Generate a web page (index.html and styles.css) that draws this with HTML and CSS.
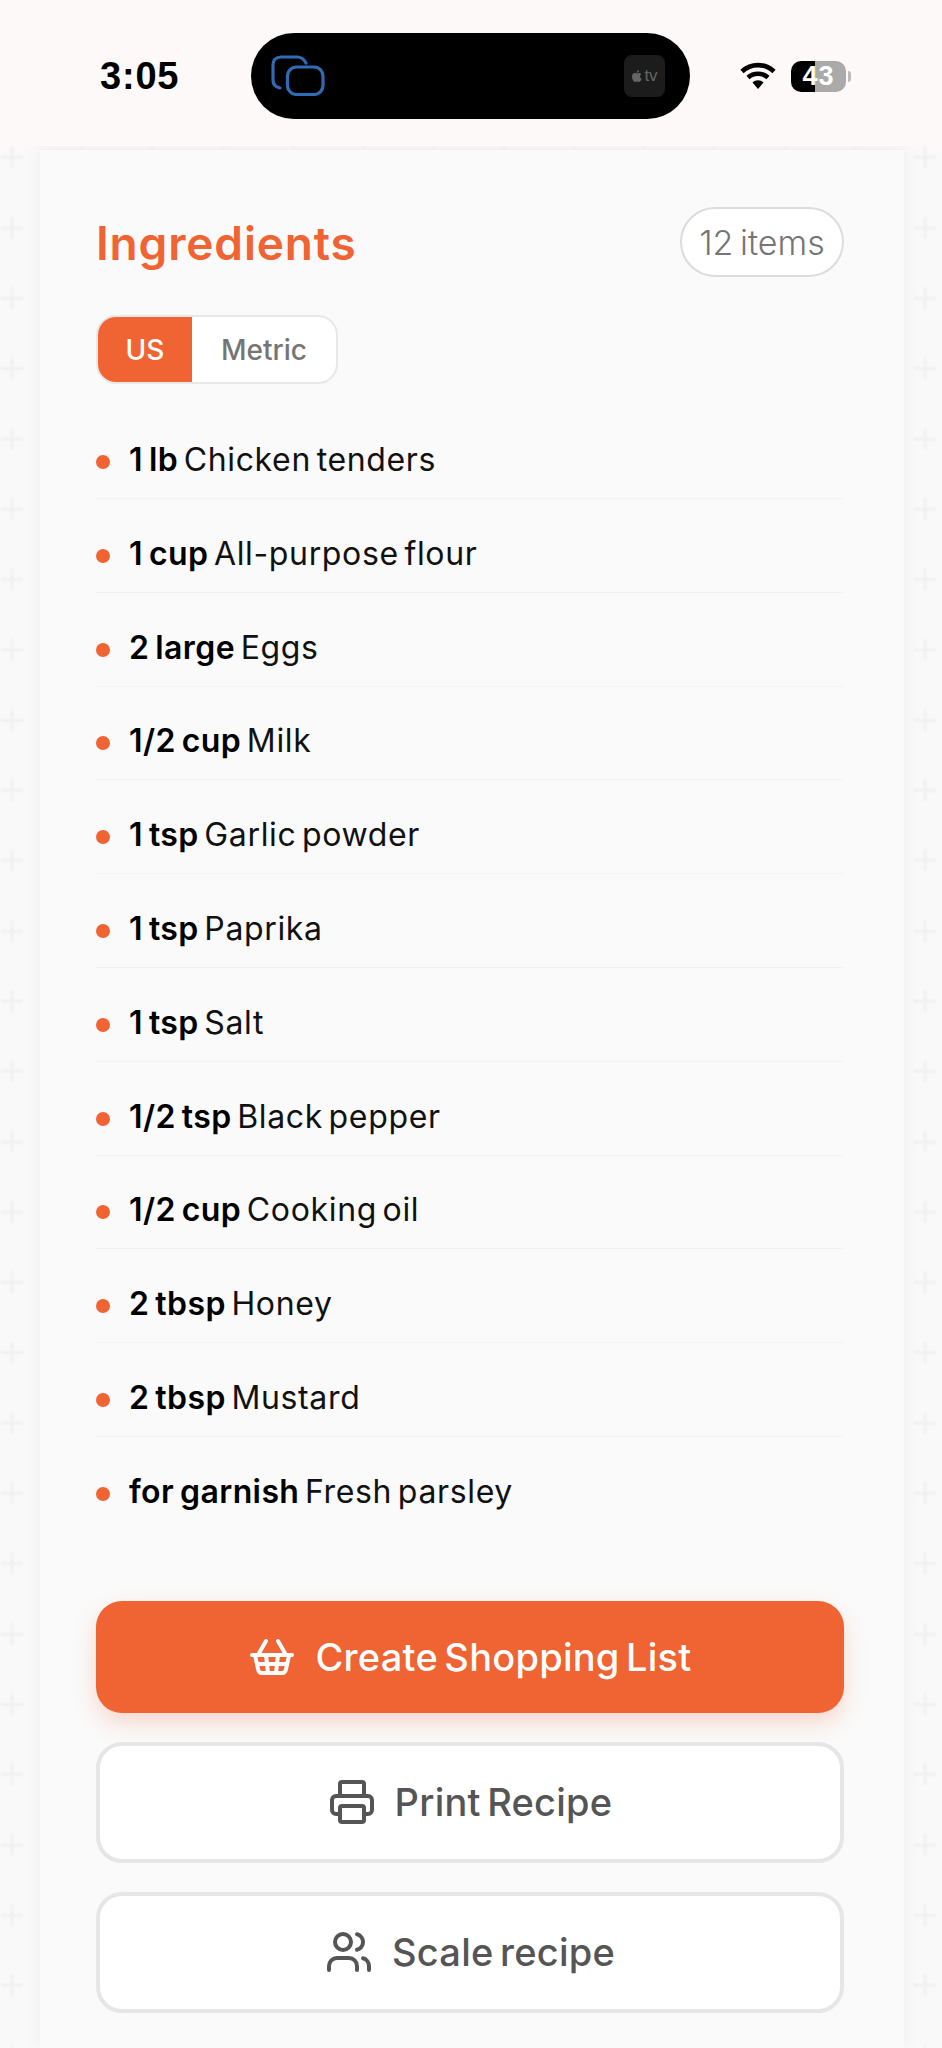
FILE: index.html
```html
<!DOCTYPE html>
<html lang="en">
<head>
<meta charset="utf-8">
<title>Ingredients</title>
<link rel="stylesheet" href="styles.css">
</head>
<body>
<header class="status">
  <span class="time">3:05</span>
  <div class="island">
    <svg class="island-stack" viewBox="0 0 54 41" fill="none" stroke="#2f6cb5" stroke-width="3.2" stroke-linecap="round">
      <path d="M9 33C4 32 2 29 2 25V10C2 5 5 2 10 2H26C30 2 33 4 35 8"/>
      <rect x="16.5" y="12" width="35.500" height="27.500" rx="9"/>
    </svg>
    <div class="tv">
      <svg class="apple" viewBox="0 0 14 16" fill="#666"><path d="M10.500 8.500c0-1.700 1.400-2.500 1.500-2.600-.8-1.200-2.100-1.400-2.500-1.400-1.100-.1-2.100.6-2.600.6s-1.400-.6-2.300-.6C3.400 4.500 2.300 5.200 1.700 6.200.5 8.400 1.400 11.600 2.600 13.300c.6.800 1.300 1.800 2.200 1.700.9 0 1.200-.6 2.300-.6s1.400.6 2.300.6 1.500-.8 2.100-1.700c.7-1 .9-1.900 1-2-.1 0-2-.8-2-2.800zM8.700 3.300c.5-.6.800-1.400.7-2.300-.7 0-1.600.5-2.100 1.100-.5.500-.9 1.400-.8 2.200.8.100 1.700-.4 2.200-1z"/></svg>
      <span>tv</span>
    </div>
  </div>
  <svg class="wifi" viewBox="0 0 36 27" fill="none" stroke="#000" stroke-width="4.600">
    <path d="M2 9.500C11 1 25 1 34 9.500"/>
    <path d="M8 15.500C13.500 10.500 22.500 10.500 28 15.500"/>
    <path class="wifi-dot" d="M12.500 20.500C15.500 17.500 20.500 17.500 23.500 20.500L18 27Z"/>
  </svg>
  <div class="battery">43</div>
  <span class="battery-nub"></span>
</header>

<main class="card">
  <div class="card-head">
    <h2 class="title">Ingredients</h2>
    <span class="count">12 items</span>
  </div>

  <div class="units">
    <button class="unit unit-active">US</button>
    <button class="unit">Metric</button>
  </div>

  <ul class="list">
    <li class="row"><b>1 lb</b> Chicken tenders</li>
    <li class="row"><b>1 cup</b> All-purpose flour</li>
    <li class="row"><b>2 large</b> Eggs</li>
    <li class="row"><b>1/2 cup</b> Milk</li>
    <li class="row"><b>1 tsp</b> Garlic powder</li>
    <li class="row"><b>1 tsp</b> Paprika</li>
    <li class="row"><b>1 tsp</b> Salt</li>
    <li class="row"><b>1/2 tsp</b> Black pepper</li>
    <li class="row"><b>1/2 cup</b> Cooking oil</li>
    <li class="row"><b>2 tbsp</b> Honey</li>
    <li class="row"><b>2 tbsp</b> Mustard</li>
    <li class="row"><b>for garnish</b> Fresh parsley</li>
  </ul>

  <div class="actions">
    <button class="btn btn-primary">
      <svg class="btn-icon" viewBox="0 0 24 24" fill="none" stroke="currentColor" stroke-width="2" stroke-linecap="round" stroke-linejoin="round"><path d="m15 11-1 9"/><path d="m19 11-4-7"/><path d="M2 11h20"/><path d="m3.500 11 1.600 7.400a2 2 0 0 0 2 1.600h9.800a2 2 0 0 0 2-1.600l1.700-7.400"/><path d="M4.500 15.500h15"/><path d="m5 11 4-7"/><path d="m9 11 1 9"/></svg>
      <span>Create Shopping List</span>
    </button>
    <button class="btn btn-outline">
      <svg class="btn-icon" viewBox="0 0 24 24" fill="none" stroke="currentColor" stroke-width="2" stroke-linecap="round" stroke-linejoin="round"><path d="M6 18H4a2 2 0 0 1-2-2v-5a2 2 0 0 1 2-2h16a2 2 0 0 1 2 2v5a2 2 0 0 1-2 2h-2"/><path d="M6 9V3a1 1 0 0 1 1-1h10a1 1 0 0 1 1 1v6"/><rect x="6" y="14" width="12" height="8" rx="1"/></svg>
      <span>Print Recipe</span>
    </button>
    <button class="btn btn-outline">
      <svg class="btn-icon" viewBox="0 0 24 24" fill="none" stroke="currentColor" stroke-width="2" stroke-linecap="round" stroke-linejoin="round"><path d="M16 21v-2a4 4 0 0 0-4-4H6a4 4 0 0 0-4 4v2"/><circle cx="9" cy="7" r="4"/><path d="M22 21v-2a4 4 0 0 0-3-3.870"/><path d="M16 3.130a4 4 0 0 1 0 7.750"/></svg>
      <span>Scale recipe</span>
    </button>
  </div>
</main>
</body>
</html>
```

FILE: styles.css
```css
* { box-sizing: border-box; }

html, body { margin: 0; padding: 0; }

body {
  height: 2048px;
  overflow: hidden;
  font-family: Inter, "Liberation Sans", sans-serif;
  background:
    url("data:image/svg+xml,%3Csvg xmlns='http://www.w3.org/2000/svg' width='70.25' height='70.3'%3E%3Cfilter id='b'%3E%3CfeGaussianBlur stdDeviation='1.2'/%3E%3C/filter%3E%3Cpath d='M12 7v22M1 18h22' stroke='%23efefef' stroke-width='2.500' fill='none' filter='url(%23b)'/%3E%3C/svg%3E") 0 -1px / 70.25px 70.3px,
    #f9f9f9;
}

/* status bar */
.status {
  height: 146px;
  background: #fdf9f8;
  display: flex;
  align-items: flex-start;
  position: relative;
  z-index: 1;
}

.time {
  margin: 55px 0 0 100px;
  width: 79px;
  font: 700 38px/42px "Liberation Sans", sans-serif;
  letter-spacing: .8px;
  color: #000;
}

.island {
  margin: 33px 0 0 72px;
  width: 439px;
  height: 86px;
  background: #000;
  border-radius: 43px;
  display: flex;
  align-items: center;
  justify-content: space-between;
  padding: 0 25px 0 20px;
}

.island-stack { width: 54px; height: 41px; margin-top: -2px; }

.tv {
  width: 41px;
  height: 42px;
  background: #1c1c1c;
  border-radius: 8px;
  display: flex;
  align-items: center;
  justify-content: center;
  gap: 1px;
  font: 400 17px/20px "Liberation Sans", sans-serif;
  color: #666;
}

.apple { width: 12px; height: 14px; }

.wifi { width: 36px; height: 27px; margin: 62px 0 0 50px; }
.wifi-dot { fill: #000; stroke: none; }

.battery {
  margin: 61px 0 0 15px;
  width: 55px;
  height: 31px;
  border-radius: 10px;
  background: linear-gradient(90deg, #000 0 24px, #aaa 24px);
  color: #fff;
  font: 700 27px/31px "Liberation Sans", sans-serif;
  letter-spacing: 1px;
  text-align: center;
}

.battery-nub {
  margin: 71px 0 0 2px;
  width: 3px;
  height: 11px;
  border-radius: 0 3px 3px 0;
  background: #bbb;
}

/* card */
.card {
  margin: 3px 38px 0 40px;
  padding: 57px 60px 0 56px;
  height: 1899px;
  background: #fafafa;
  border-top: 1px solid #f0f0f0;
  box-shadow: 0 0 16px rgba(0, 0, 0, .05);
}

.card-head {
  display: flex;
  align-items: center;
  justify-content: space-between;
}

.title {
  margin: 2px 0 0;
  font-size: 46px;
  line-height: 56px;
  font-weight: 600;
  letter-spacing: .85px;
  color: #f06333;
}

.count {
  width: 164px;
  height: 70px;
  border: 2px solid #dedcdb;
  border-radius: 35px;
  background: #fff;
  display: flex;
  align-items: center;
  justify-content: center;
  font-size: 34px;
  font-weight: 300;
  word-spacing: -3px;
  color: #757575;
}

.units {
  margin-top: 38px;
  width: 242px;
  height: 69px;
  display: flex;
  border: 2px solid #e8e8e8;
  border-radius: 20px;
  background: #fff;
  overflow: hidden;
}

.unit {
  border: 0;
  background: none;
  padding: 0;
  font: 500 28px/1 Inter, sans-serif;
  color: #757575;
  flex: 1;
}

.unit-active {
  flex: 0 0 94px;
  background: #f06333;
  color: #fff;
}

/* list */
.list {
  list-style: none;
  margin: 52px 0 0;
  padding: 0;
}

.row {
  position: relative;
  padding: 0 0 14px 33px;
  margin-bottom: 30.800px;
  border-bottom: 1px solid #f3f3f3;
  font-size: 32px;
  line-height: 48px;
  font-weight: 400;
  letter-spacing: .65px;
  word-spacing: -4px;
  color: #111;
}

.row:last-child { border-bottom: 0; margin-bottom: 0; }

.row::before {
  content: "";
  position: absolute;
  left: 0;
  top: 19px;
  width: 14px;
  height: 14px;
  border-radius: 50%;
  background: #f06333;
}

.row b { font-weight: 600; color: #000; letter-spacing: .4px; word-spacing: -2.500px; }

/* buttons */
.actions {
  margin-top: 71px;
  display: flex;
  flex-direction: column;
}

.btn {
  display: flex;
  align-items: center;
  justify-content: center;
  gap: 19px;
  width: 100%;
  border-radius: 26px;
  font: 500 38px/48px Inter, sans-serif;
  letter-spacing: .25px;
  word-spacing: -4px;
}

.btn-icon { width: 48px; height: 48px; flex: none; }

.btn-primary {
  height: 112px;
  border: 0;
  background: #f06333;
  color: #fff;
  box-shadow: 0 10px 22px rgba(242, 100, 52, .22);
}

.btn-outline {
  height: 121px;
  margin-top: 29px;
  border: 4px solid #e6e6e6;
  background: #fff;
  color: #555;
}
```
